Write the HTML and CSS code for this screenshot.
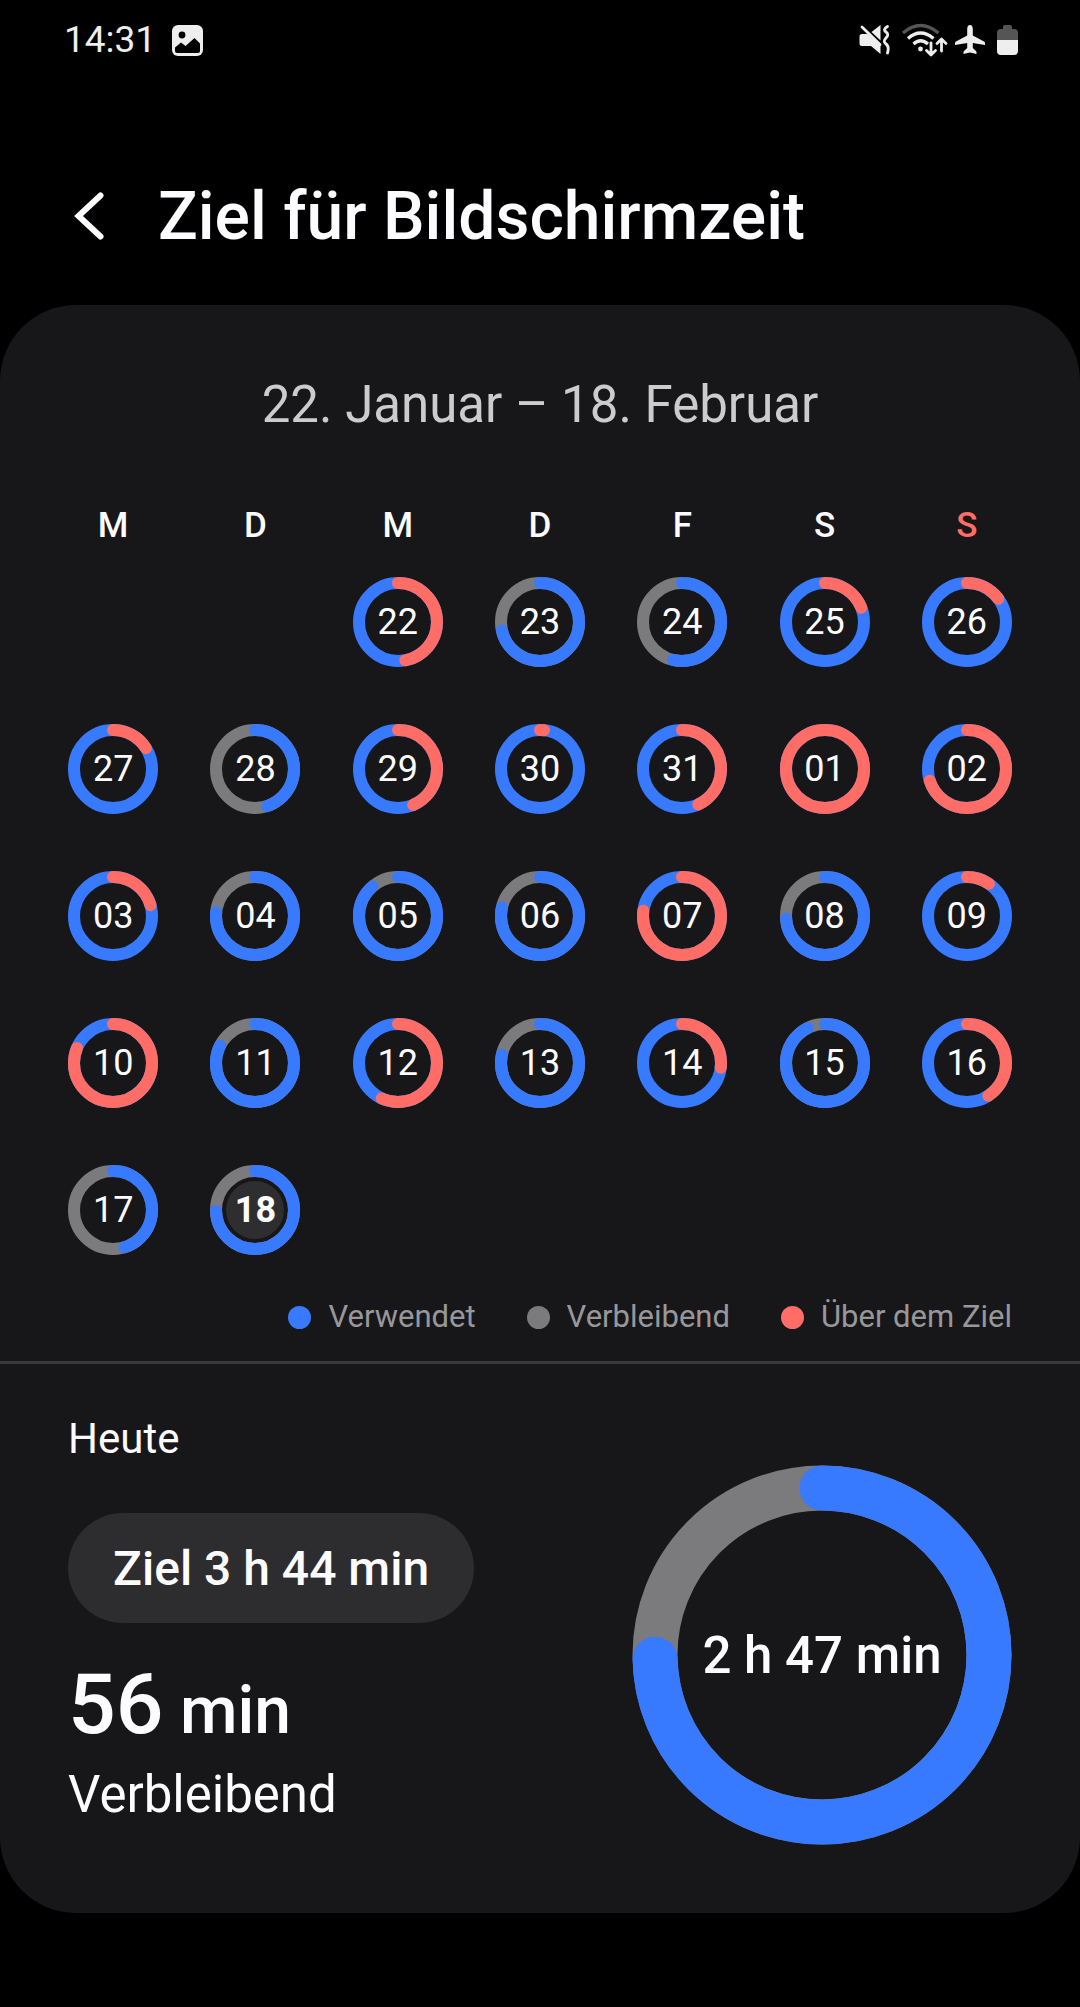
FILE: index.html
```html
<!DOCTYPE html>
<html lang="de">
<head>
<meta charset="utf-8">
<meta name="viewport" content="width=device-width, initial-scale=1">
<title>Ziel für Bildschirmzeit</title>
<link rel="stylesheet" href="styles.css">
</head>
<body>
<div class="status">
  <span class="status-time">14:31</span>
  <svg class="icon-photo" viewBox="0 0 31 31" aria-hidden="true">
    <rect width="31" height="31" rx="6" fill="#eee"/>
    <circle cx="10" cy="10" r="3.4" fill="#000"/>
    <path d="M3 22.5L9 17.5L13.500 21L22.500 13L28 18.500V26Q28 28 26 28H5Q3 28 3 26Z" fill="#000"/>
  </svg>
  <div class="status-icons">
    <svg class="icon-mute" viewBox="0 0 32 32" aria-hidden="true">
      <path d="M3 10H8.500L21.500 21V30L12 22H3Q0.500 22 0.500 19.500V12.500Q0.500 10 3 10Z" fill="#eee"/>
      <path d="M12.500 8L21.500 1V16.500Z" fill="#eee"/>
      <path d="M3 3L21 20.500" stroke="#eee" stroke-width="2.800" stroke-linecap="round"/>
      <path d="M28.500 2.500Q23.500 5.500 27 8T27 14T27 20T28.500 29" fill="none" stroke="#eee" stroke-width="2.800" stroke-linejoin="round" stroke-linecap="round"/>
    </svg>
    <svg class="icon-wifi" viewBox="0 0 46 34" aria-hidden="true">
      <g fill="none" stroke-width="3.200">
        <path d="M1 10Q18.500 -5 36.500 10" stroke="#555"/>
        <path d="M6 15.500Q18.500 4.500 31.500 15.500" stroke="#eee"/>
        <path d="M11.500 21Q18.500 14.500 26 21" stroke="#eee"/>
        <path d="M29 20V31M24.500 27.500L29 32L33.500 27.500M39.500 28V17M35 20.500L39.500 16L44 20.500" stroke="#eee" stroke-width="2.800" stroke-linejoin="round" stroke-linecap="round"/>
      </g>
      <circle cx="18.500" cy="26" r="2.400" fill="#eee"/>
    </svg>
    <svg class="icon-plane" viewBox="0 0 32 30" aria-hidden="true">
      <path d="M16 0Q18.600 0 18.800 4V10.500L30 16.500Q31 17 31 18V20L18.800 18V23L22 26Q22.500 26.500 22.500 27.500V29L16 27.500L9.500 29V27.500Q9.500 26.500 10 26L13.200 23V18L1 20V18Q1 17 2 16.500L13.200 10.500V4Q13.400 0 16 0Z" fill="#eee"/>
    </svg>
    <svg class="icon-battery" viewBox="0 0 21 30" aria-hidden="true">
      <path d="M6 4V2Q6 0 8 0H13Q15 0 15 2V4H17Q21 4 21 8V15H0V8Q0 4 4 4Z" fill="#555"/>
      <path d="M0 15H21V26Q21 30 17 30H4Q0 30 0 26Z" fill="#eee"/>
    </svg>
  </div>
</div>

<header class="app-bar">
  <button class="back" type="button" aria-label="Zurück">
    <svg class="icon-back" viewBox="0 0 30 48" aria-hidden="true"><path d="M26.500 3.500L4.500 24L26.500 44.500" fill="none" stroke="#fcfcff" stroke-width="6" stroke-linecap="round" stroke-linejoin="miter"/></svg>
  </button>
  <h1 class="title">Ziel für Bildschirmzeit</h1>
</header>

<main class="card">
  <section class="month">
    <h2 class="range">22. Januar – 18. Februar</h2>
    <table class="calendar">
      <thead>
        <tr><th scope="col">M</th><th scope="col">D</th><th scope="col">M</th><th scope="col">D</th><th scope="col">F</th><th scope="col">S</th><th scope="col" class="sunday">S</th></tr>
      </thead>
      <tbody>
        <tr>
          <td></td>
          <td></td>
          <td><div class="day over"><svg class="ring" viewBox="0 0 90 90"><circle/><circle class="arc" pathLength="1000" style="stroke-dasharray:470 1000"/></svg><span>22</span></div></td>
          <td><div class="day"><svg class="ring" viewBox="0 0 90 90"><circle/><circle class="arc" pathLength="1000" style="stroke-dasharray:715 1000"/></svg><span>23</span></div></td>
          <td><div class="day"><svg class="ring" viewBox="0 0 90 90"><circle/><circle class="arc" pathLength="1000" style="stroke-dasharray:537 1000"/></svg><span>24</span></div></td>
          <td><div class="day over"><svg class="ring" viewBox="0 0 90 90"><circle/><circle class="arc" pathLength="1000" style="stroke-dasharray:190 1000"/></svg><span>25</span></div></td>
          <td><div class="day over"><svg class="ring" viewBox="0 0 90 90"><circle/><circle class="arc" pathLength="1000" style="stroke-dasharray:148 1000"/></svg><span>26</span></div></td>
        </tr>
        <tr>
          <td><div class="day over"><svg class="ring" viewBox="0 0 90 90"><circle/><circle class="arc" pathLength="1000" style="stroke-dasharray:160 1000"/></svg><span>27</span></div></td>
          <td><div class="day"><svg class="ring" viewBox="0 0 90 90"><circle/><circle class="arc" pathLength="1000" style="stroke-dasharray:449 1000"/></svg><span>28</span></div></td>
          <td><div class="day over"><svg class="ring" viewBox="0 0 90 90"><circle/><circle class="arc" pathLength="1000" style="stroke-dasharray:436 1000"/></svg><span>29</span></div></td>
          <td><div class="day over"><svg class="ring" viewBox="0 0 90 90"><circle/><circle class="arc" pathLength="1000" style="stroke-dasharray:17 1000"/></svg><span>30</span></div></td>
          <td><div class="day over"><svg class="ring" viewBox="0 0 90 90"><circle/><circle class="arc" pathLength="1000" style="stroke-dasharray:431 1000"/></svg><span>31</span></div></td>
          <td><div class="day over"><svg class="ring" viewBox="0 0 90 90"><circle/><circle class="arc" pathLength="1000" style="stroke-dasharray:1000 1000"/></svg><span>01</span></div></td>
          <td><div class="day over"><svg class="ring" viewBox="0 0 90 90"><circle/><circle class="arc" pathLength="1000" style="stroke-dasharray:701 1000"/></svg><span>02</span></div></td>
        </tr>
        <tr>
          <td><div class="day over"><svg class="ring" viewBox="0 0 90 90"><circle/><circle class="arc" pathLength="1000" style="stroke-dasharray:205 1000"/></svg><span>03</span></div></td>
          <td><div class="day"><svg class="ring" viewBox="0 0 90 90"><circle/><circle class="arc" pathLength="1000" style="stroke-dasharray:766 1000"/></svg><span>04</span></div></td>
          <td><div class="day"><svg class="ring" viewBox="0 0 90 90"><circle/><circle class="arc" pathLength="1000" style="stroke-dasharray:886 1000"/></svg><span>05</span></div></td>
          <td><div class="day"><svg class="ring" viewBox="0 0 90 90"><circle/><circle class="arc" pathLength="1000" style="stroke-dasharray:786 1000"/></svg><span>06</span></div></td>
          <td><div class="day over"><svg class="ring" viewBox="0 0 90 90"><circle/><circle class="arc" pathLength="1000" style="stroke-dasharray:772 1000"/></svg><span>07</span></div></td>
          <td><div class="day"><svg class="ring" viewBox="0 0 90 90"><circle/><circle class="arc" pathLength="1000" style="stroke-dasharray:739 1000"/></svg><span>08</span></div></td>
          <td><div class="day over"><svg class="ring" viewBox="0 0 90 90"><circle/><circle class="arc" pathLength="1000" style="stroke-dasharray:95 1000"/></svg><span>09</span></div></td>
        </tr>
        <tr>
          <td><div class="day over"><svg class="ring" viewBox="0 0 90 90"><circle/><circle class="arc" pathLength="1000" style="stroke-dasharray:813 1000"/></svg><span>10</span></div></td>
          <td><div class="day"><svg class="ring" viewBox="0 0 90 90"><circle/><circle class="arc" pathLength="1000" style="stroke-dasharray:823 1000"/></svg><span>11</span></div></td>
          <td><div class="day over"><svg class="ring" viewBox="0 0 90 90"><circle/><circle class="arc" pathLength="1000" style="stroke-dasharray:569 1000"/></svg><span>12</span></div></td>
          <td><div class="day"><svg class="ring" viewBox="0 0 90 90"><circle/><circle class="arc" pathLength="1000" style="stroke-dasharray:784 1000"/></svg><span>13</span></div></td>
          <td><div class="day over"><svg class="ring" viewBox="0 0 90 90"><circle/><circle class="arc" pathLength="1000" style="stroke-dasharray:270 1000"/></svg><span>14</span></div></td>
          <td><div class="day"><svg class="ring" viewBox="0 0 90 90"><circle/><circle class="arc" pathLength="1000" style="stroke-dasharray:928 1000"/></svg><span>15</span></div></td>
          <td><div class="day over"><svg class="ring" viewBox="0 0 90 90"><circle/><circle class="arc" pathLength="1000" style="stroke-dasharray:408 1000"/></svg><span>16</span></div></td>
        </tr>
        <tr>
          <td><div class="day"><svg class="ring" viewBox="0 0 90 90"><circle/><circle class="arc" pathLength="1000" style="stroke-dasharray:453 1000"/></svg><span>17</span></div></td>
          <td><div class="day today"><svg class="ring" viewBox="0 0 90 90"><circle/><circle class="arc" pathLength="1000" style="stroke-dasharray:746 1000"/></svg><span>18</span></div></td>
          <td></td>
          <td></td>
          <td></td>
          <td></td>
          <td></td>
        </tr>
      </tbody>
    </table>
    <ul class="legend">
      <li class="used">Verwendet</li>
      <li class="left">Verbleibend</li>
      <li class="exceeded">Über dem Ziel</li>
    </ul>
  </section>

  <section class="summary">
    <div class="facts">
      <h3 class="label">Heute</h3>
      <button class="goal" type="button">Ziel 3 h 44 min</button>
      <p class="remaining"><span class="remaining-value">56</span> min</p>
      <p class="caption">Verbleibend</p>
    </div>
    <div class="total">
      <svg class="total-ring" viewBox="0 0 380 380"><circle/><circle class="arc" pathLength="1000" style="stroke-dasharray:746 1000"/></svg>
      <span>2 h 47 min</span>
    </div>
  </section>
</main>
</body>
</html>
```
FILE: styles.css
```css
:root {
  --blue: #387aff;
  --grey: #7b7b7d;
  --red: #ff6d66;
  --card: #17171a;
  --text: #fcfcff;
}

* {
  box-sizing: border-box;
}

body {
  margin: 0;
  background: #000;
  color: var(--text);
  font-family: Roboto, "Noto Sans", sans-serif;
}

h1, h2, h3, p, ul {
  margin: 0;
  padding: 0;
}

svg {
  display: block;
}

button {
  border: 0;
  background: none;
  color: inherit;
  font: inherit;
  cursor: pointer;
}

/* Status bar */
.status {
  display: flex;
  align-items: center;
  height: 80px;
  padding: 0 62px 0 64px;
}

.status-time {
  color: #eee;
  font-size: 37px;
  line-height: 48px;
}

.icon-photo {
  width: 31px;
  height: 31px;
  margin-left: 16px;
}

.status-icons {
  display: flex;
  align-items: center;
  gap: 11px;
  margin-left: auto;
}

.icon-mute {
  width: 32px;
  height: 32px;
}

.icon-wifi {
  width: 46px;
  height: 34px;
  margin-right: -5px;
}

.icon-plane {
  width: 32px;
  height: 30px;
}

.icon-battery {
  width: 21px;
  height: 30px;
}

/* App bar */
.app-bar {
  display: flex;
  align-items: center;
  gap: 36px;
  padding: 94px 56px 47px;
}

.back {
  padding: 18px;
}

.icon-back {
  width: 30px;
  height: 48px;
}

.title {
  padding-top: 2px;
  font-size: 66px;
  font-weight: 500;
  line-height: 82px;
}

/* Card */
.card {
  background: var(--card);
  border-radius: 76px;
}

.month {
  padding: 70px 42px 26px;
  border-bottom: 3px solid #39393b;
}

.range {
  margin-bottom: 69px;
  color: #ccc;
  font-size: 51px;
  font-weight: 400;
  line-height: 60px;
  text-align: center;
}

.calendar {
  width: 100%;
  table-layout: fixed;
  border-collapse: collapse;
}

.calendar th {
  height: 44px;
  padding: 0;
  font-size: 35px;
  font-weight: 500;
  line-height: 44px;
}

.calendar .sunday {
  color: var(--red);
}

.calendar td {
  height: 147px;
  padding: 0;
}

.day,
.total {
  display: grid;
  place-items: center;
}

.day > *,
.total > * {
  grid-area: 1 / 1;
}

.day {
  --base: var(--grey);
  --arc: var(--blue);
  font-size: 36px;
  line-height: 44px;
}

.day.over {
  --base: var(--blue);
  --arc: var(--red);
}

.ring {
  width: 90px;
  height: 90px;
}

.ring circle,
.total-ring circle {
  fill: none;
  stroke: var(--base);
}

.ring .arc,
.total-ring .arc {
  stroke: var(--arc);
  stroke-linecap: round;
  transform: rotate(-90deg);
  transform-origin: center;
}

.ring circle {
  cx: 45px;
  cy: 45px;
  r: 39px;
  stroke-width: 12px;
}

.today span {
  width: 58px;
  border-radius: 29px;
  background: #2e2e30;
  font-weight: 700;
  line-height: 58px;
  text-align: center;
}

.legend {
  display: flex;
  flex-wrap: wrap;
  justify-content: flex-end;
  gap: 51px;
  margin-top: 16px;
  padding-right: 26px;
  list-style: none;
  color: #98989a;
  font-size: 31px;
  line-height: 36px;
}

.legend li {
  display: flex;
  align-items: center;
  gap: 17px;
}

.legend li::before {
  content: "";
  width: 23px;
  height: 23px;
  border-radius: 50%;
  background: var(--dot);
}

.used {
  --dot: var(--blue);
}

.left {
  --dot: var(--grey);
}

.exceeded {
  --dot: var(--red);
}

/* Today summary */
.summary {
  display: flex;
  justify-content: space-between;
  padding: 50px 68px 68px;
}

.label {
  font-size: 42px;
  font-weight: 400;
  line-height: 50px;
}

.goal {
  height: 110px;
  margin-top: 49px;
  padding: 0 45px;
  border-radius: 55px;
  background: #2d2d2f;
  font-size: 48px;
  font-weight: 500;
}

.remaining {
  margin-top: 32px;
  font-size: 66px;
  font-weight: 500;
  line-height: 100px;
}

.remaining-value {
  font-size: 84px;
}

.caption {
  margin-top: 4px;
  font-size: 51px;
  line-height: 60px;
}

.total {
  --base: var(--grey);
  --arc: var(--blue);
  margin-top: 51px;
  font-size: 51px;
  font-weight: 500;
}

.total-ring {
  width: 380px;
  height: 380px;
}

.total-ring circle {
  cx: 190px;
  cy: 190px;
  r: 167px;
  stroke-width: 45px;
}
```
